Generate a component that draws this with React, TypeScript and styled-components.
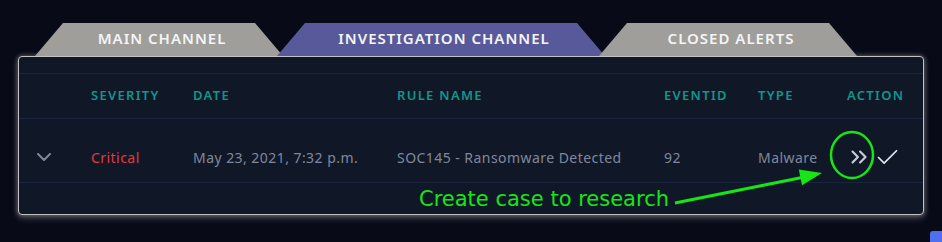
import React from 'react';
import styled, { createGlobalStyle } from 'styled-components';
import { ChevronsRight, Check } from 'lucide-react';

const GlobalStyle = createGlobalStyle`
    html, body {
        margin: 0;
        padding: 0;
        background: #080a18;
        overflow: hidden;
    }
`;

const Page = styled.div`
    position: relative;
    width: 942px;
    height: 242px;
    padding: 23px 18px 0 18px;
    box-sizing: border-box;
    font-family: "Noto Sans", "Open Sans", sans-serif;
    overflow: hidden;
`;

const TabRow = styled.div`
    display: flex;
    height: 33px;
    padding-left: 17px;
`;

interface TabProps {
    $width: number;
    $active?: boolean;
}

const Tab = styled.div<TabProps>`
    width: ${props => props.$width}px;
    height: 33px;
    box-sizing: border-box;
    padding: 0 0 3px 6px;
    flex-shrink: 0;
    display: flex;
    align-items: center;
    justify-content: center;
    background: ${props => props.$active ? '#58599a' : '#9f9e9b'};
    color: #f4f4f6;
    font-size: 15px;
    font-weight: 600;
    letter-spacing: 1px;
    clip-path: polygon(28px 0, calc(100% - 28px) 0, 100% 100%, 0 100%);
    border-radius: 6px 6px 0 0;

    & + & {
        margin-left: -6px;
    }
`;

const Card = styled.div`
    height: 159px;
    box-sizing: border-box;
    border: 1px solid #c2c2c2;
    border-radius: 4px;
    background: #101828;
    box-shadow: 0 0 4px 1px rgba(190, 190, 190, 0.35), 0 3px 7px rgba(190, 190, 190, 0.3);
    display: flex;
    flex-direction: column;
`;

const Spacer = styled.div`
    height: 16px;
    border-bottom: 1px solid #1a2340;
`;

const Row = styled.div<{ $head?: boolean }>`
    display: grid;
    grid-template-columns: 72px 102px 204px 267px 94px 89px 1fr;
    align-items: center;
    box-sizing: content-box;
    height: ${props => props.$head ? '41px' : '50px'};
    padding-top: ${props => props.$head ? '0' : '13px'};
    padding-bottom: ${props => props.$head ? '3px' : '0'};
    border-bottom: 1px solid #1a2340;
`;

const HeadCell = styled.div`
    color: #11968b;
    font-size: 13px;
    font-weight: 600;
    letter-spacing: 1.3px;
`;

const Cell = styled.div<{ $tone?: 'red' }>`
    color: ${props => props.$tone === 'red' ? '#e2383f' : '#80879c'};
    font-size: 14px;
    letter-spacing: 0.45px;
`;

const ExpandCell = styled.div`
    padding-left: 18px;
    display: flex;
    align-items: center;
    color: #7f879b;
`;

const ActionCell = styled.div`
    display: flex;
    align-items: center;
    margin-left: -1px;
`;

const ActionButton = styled.span<{ $light?: boolean }>`
    display: inline-flex;
    color: ${props => props.$light ? '#e4e7ee' : '#c6ccd8'};
    & + & {
        margin-left: 2px;
    }
`;

const Note = styled.span`
    position: absolute;
    left: 419px;
    top: 187px;
    font-family: "DejaVu Sans", sans-serif;
    font-size: 21px;
    line-height: 24px;
    color: #16e616;
    white-space: nowrap;
`;

const Overlay = styled.svg`
    position: absolute;
    left: 0;
    top: 0;
    pointer-events: none;
`;

const Widget = styled.div`
    position: absolute;
    left: 930px;
    top: 231px;
    width: 20px;
    height: 20px;
    border-radius: 3px;
    background: #4f6ff0;
`;

const columns = ['SEVERITY', 'DATE', 'RULE NAME', 'EVENTID', 'TYPE', 'ACTION'];

export default function App() {
    return (
        <>
            <GlobalStyle />
            <Page>
                <TabRow>
                    <Tab $width={248}>MAIN CHANNEL</Tab>
                    <Tab $width={328} $active>INVESTIGATION CHANNEL</Tab>
                    <Tab $width={258}>CLOSED ALERTS</Tab>
                </TabRow>
                <Card>
                    <Spacer />
                    <Row $head>
                        <div />
                        {columns.map(c => <HeadCell key={c}>{c}</HeadCell>)}
                    </Row>
                    <Row>
                        <ExpandCell>
                            <svg width="14" height="8" viewBox="0 0 14 8">
                                <polyline points="1,1 7,7 13,1" fill="none" stroke="currentColor" strokeWidth="2" strokeLinecap="round" strokeLinejoin="round" />
                            </svg>
                        </ExpandCell>
                        <Cell $tone="red">Critical</Cell>
                        <Cell>May 23, 2021, 7:32 p.m.</Cell>
                        <Cell>SOC145 - Ransomware Detected</Cell>
                        <Cell>92</Cell>
                        <Cell>Malware</Cell>
                        <ActionCell>
                            <ActionButton><ChevronsRight size={26} strokeWidth={2} /></ActionButton>
                            <ActionButton $light><Check size={27} strokeWidth={1.5} /></ActionButton>
                        </ActionCell>
                    </Row>
                </Card>
                <Overlay width="942" height="242" viewBox="0 0 942 242">
                    <ellipse cx="852" cy="155" rx="21" ry="23" fill="none" stroke="#16e616" strokeWidth="2.5" />
                    <line x1="675" y1="203" x2="802" y2="177.5" stroke="#16e616" strokeWidth="3" />
                    <polygon points="822,173 798.8,169.6 802,185.2" fill="#16e616" />
                </Overlay>
                <Note>Create case to research</Note>
                <Widget />
            </Page>
        </>
    );
}
